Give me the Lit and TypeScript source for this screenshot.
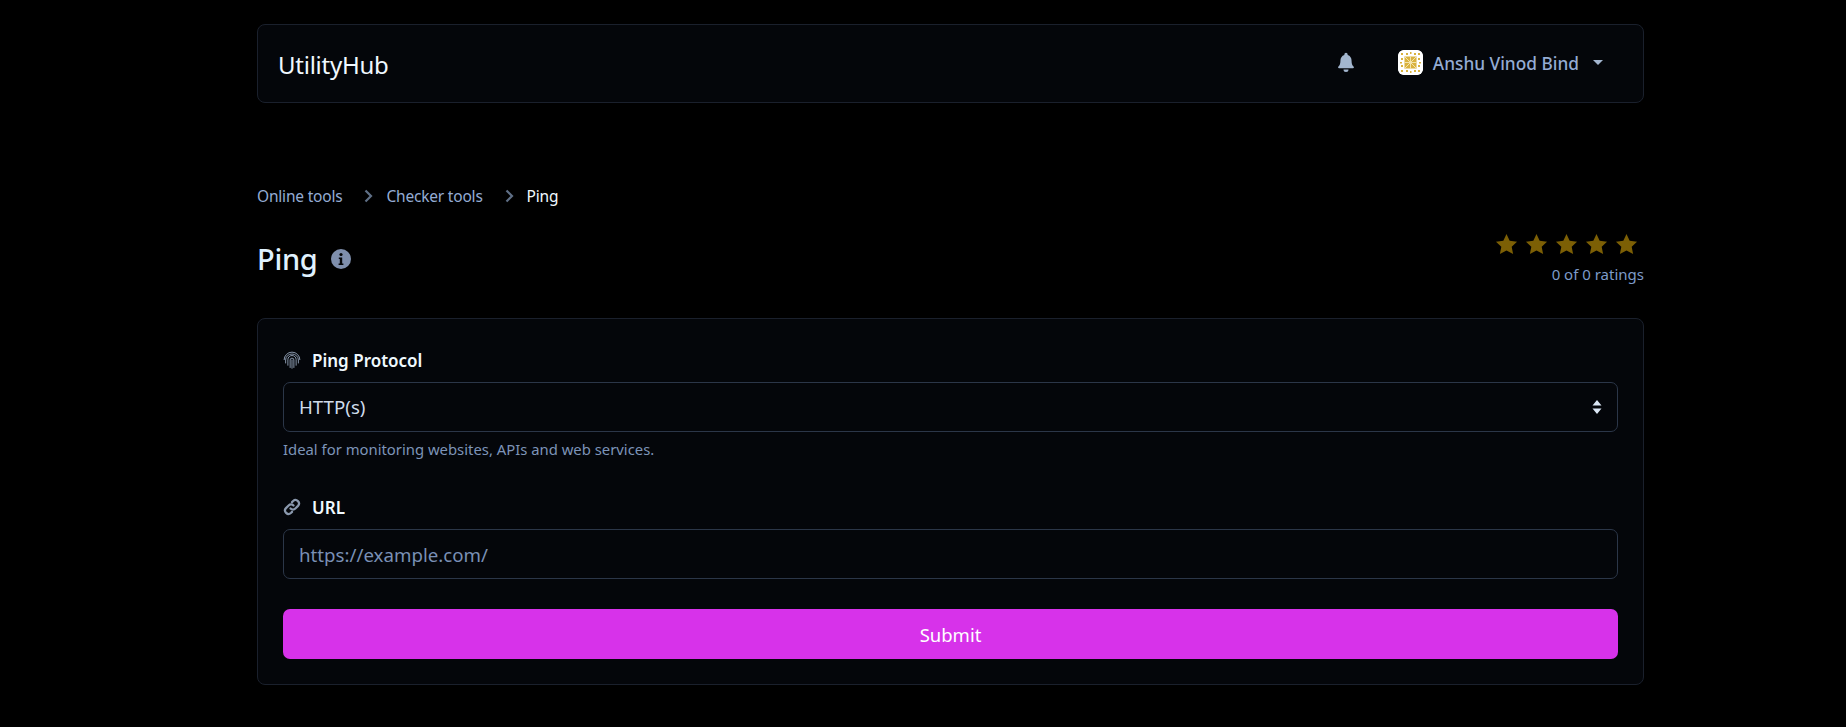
import { LitElement, html, css, svg } from "lit";
import { customElement } from "lit/decorators.js";

const star = svg`<path d="M12 1l3.300 7.100 7.700 1-5.600 5.300 1.500 7.600L12 18.300 5.100 22l1.500-7.600L1 9.100l7.700-1z"/>`;

@customElement("app-root")
export class AppRoot extends LitElement {
  static styles = css`
    :host { display: block; min-height: 727px; background: #000; font-family: "Noto Sans", "Open Sans", sans-serif; color: #e2e8f0; overflow: hidden; }
    .wrap { width: 1387px; margin-left: 257px; padding-top: 24px; box-sizing: border-box; }
    .nav { height: 79px; box-sizing: border-box; border: 1px solid #1a202c; border-radius: 8px; background: #04060a; display: flex; align-items: center; padding: 0 20px; }
    .brand { font-size: 24px; color: #f0f9ff; flex: 1; letter-spacing: -0.25px; margin-top: 1px; }
    .bell { width: 20px; height: 20px; fill: #a3b6cf; margin-right: 42px; margin-top: -3px; }
    .avatar { width: 25px; height: 25px; border-radius: 6px; background: #fff; margin-right: 10px; margin-top: -3px; }
    .user { font-size: 17.300px; font-weight: 500; color: #94acd4; margin-top: 0; }
    .caret { width: 0; height: 0; border: 5px solid transparent; border-top: 5px solid #a3b6cf; border-bottom: 0; margin: -2px 20px 0 14px; }
    .crumbs { display: flex; align-items: center; margin-top: 82px; font-size: 15.500px; color: #94acd4; height: 22px; letter-spacing: -0.2px; }
    .crumbs svg { width: 14px; height: 14px; stroke: #5f6f86; fill: none; stroke-width: 2.200; margin: 0 11px 0 19px; }
    .crumbs .cur { color: #f0f9ff; }
    .head { display: flex; justify-content: space-between; margin-top: 15px; height: 96px; }
    .title { display: flex; align-items: center; gap: 14px; height: 46px; margin-top: 14px; }
    h1 { margin: 0; font-size: 29px; font-weight: 500; color: #e0f2fe; letter-spacing: -0.3px; line-height: 46px; }
    .info { width: 20px; height: 20px; }
    .rating { display: flex; flex-direction: column; align-items: flex-end; }
    .stars { display: flex; gap: 7px; margin-right: 6px; margin-top: 11px; }
    .stars svg { width: 23px; height: 23px; fill: #7c5f05; }
    .count { font-size: 15px; color: #7d9bc9; margin-top: 8px; }
    .card { height: 367px; box-sizing: border-box; border: 1px solid #1a202c; border-radius: 8px; background: #04060a; padding: 26px 25px 25px; }
    .label { display: flex; align-items: center; gap: 11px; height: 30px; font-size: 17px; font-weight: 600; color: #f0f9ff; }
    .label svg { width: 18px; height: 18px; }
    .field { height: 50px; box-sizing: border-box; border: 1px solid #2b3648; border-radius: 7px; margin-top: 7px; display: flex; align-items: center; justify-content: space-between; padding: 0 15px; font-size: 18.700px; }
    .select { color: #cfdbea; }
    .select span { margin-top: -2px; }
    .ph { color: #7a90b5; margin-top: 8px; }
    .arrows { width: 10px; height: 14px; fill: #dbe7f5; }
    .help { font-size: 14.850px; color: #7d94b8; margin-top: 7px; height: 22px; }
    .second { margin-top: 32px; }
    .second .label { height: 28px; }
    .submit { display: block; width: 100%; height: 50px; margin-top: 30px; border: 0; border-radius: 7px; background: #d732ea; color: #fff; font: inherit; font-size: 18.500px; }
  `;

  render() {
    const chev = html`<svg viewBox="0 0 14 14"><path d="M4.500 1.500L10 7l-5.500 5.500"/></svg>`;
    return html`<div class="wrap">
      <header class="nav">
        <div class="brand">UtilityHub</div>
        <svg class="bell" viewBox="0 0 24 24"><path d="M12 1a2 2 0 0 0-2 2v.6C6.900 4.500 5.300 7.200 5.300 10.500c0 4.500-1.300 5.800-2.600 7.300-.5.700 0 1.700.9 1.700h16.800c.9 0 1.400-1 .9-1.700-1.300-1.500-2.600-2.800-2.600-7.300 0-3.300-1.600-6-4.700-6.900V3a2 2 0 0 0-2-2zM9 21a3 3 0 0 0 6 0z"/></svg>
        <svg class="avatar" viewBox="0 0 25 25">
          <rect width="25" height="25" rx="6" fill="#fff"/>
          <rect x="6.500" y="6.500" width="12" height="12" fill="#d9b23e"/>
          <path d="M12.500 6.500v12M6.500 12.500h12M6.500 6.500l12 12M18.500 6.500l-12 12" stroke="#f3e3ab" stroke-width="1"/>
          <path d="M3 3h2v2H3zM8 3h2v2H8zM12 2h1.500v2H12zM16 3h2v2h-2zM20 3h2v2h-2zM3 8h2v2H3zM20 8h2v2h-2zM2 12h2v1.500H2zM21 12h2v1.500h-2zM3 15h2v2H3zM20 15h2v2h-2zM3 20h2v2H3zM8 20h2v2H8zM12 21h1.500v2H12zM16 20h2v2h-2zM20 20h2v2h-2z" fill="#d9b23e"/>
        </svg>
        <span class="user">Anshu Vinod Bind</span>
        <span class="caret"></span>
      </header>
      <nav class="crumbs"><span>Online tools</span>${chev}<span>Checker tools</span>${chev}<span class="cur">Ping</span></nav>
      <section class="head">
        <div class="title">
          <h1>Ping</h1>
          <svg class="info" viewBox="0 0 20 20"><circle cx="10" cy="10" r="10" fill="#7f8fad"/><circle cx="10" cy="5.500" r="1.600" fill="#05070a"/><path d="M7.800 8.500h3.400v6h1.200v1.500H7.600v-1.500h1.200V10H7.800z" fill="#05070a"/></svg>
        </div>
        <div class="rating">
          <div class="stars">${[1, 2, 3, 4, 5].map(() => html`<svg viewBox="0 0 24 24">${star}</svg>`)}</div>
          <div class="count">0 of 0 ratings</div>
        </div>
      </section>
      <main class="card">
        <div class="label">
          <svg viewBox="0 0 24 24" fill="none" stroke="#8a98ad" stroke-width="1.300" stroke-linecap="round"><path d="M1.500 11.500a10.500 10 0 0 1 21 0M3.500 16v-4a8.500 8 0 0 1 17 0v4M6.500 19v-7.500a5.500 5.500 0 0 1 11 0V19M9.500 22v-10a2.500 2.500 0 0 1 5 0v10M12 12v11"/></svg>
          <span>Ping Protocol</span>
        </div>
        <div class="field select"><span>HTTP(s)</span><svg class="arrows" viewBox="0 0 10 14"><path d="M5 0l4.500 5.500h-9zM5 14l4.500-5.500h-9z"/></svg></div>
        <div class="help">Ideal for monitoring websites, APIs and web services.</div>
        <div class="second">
          <div class="label">
            <svg viewBox="0 0 24 24" fill="none" stroke="#8a98ad" stroke-width="3" stroke-linecap="round"><path d="M10 14a4.500 4.500 0 0 0 6.500 0l3.500-3.500a4.600 4.600 0 0 0-6.500-6.500L12 5.500"/><path d="M14 10a4.500 4.500 0 0 0-6.500 0L4 13.500a4.600 4.600 0 0 0 6.500 6.500l1.500-1.500"/></svg>
            <span>URL</span>
          </div>
          <div class="field ph"><span>https://example.com/</span></div>
        </div>
        <button class="submit">Submit</button>
      </main>
    </div>`;
  }
}
